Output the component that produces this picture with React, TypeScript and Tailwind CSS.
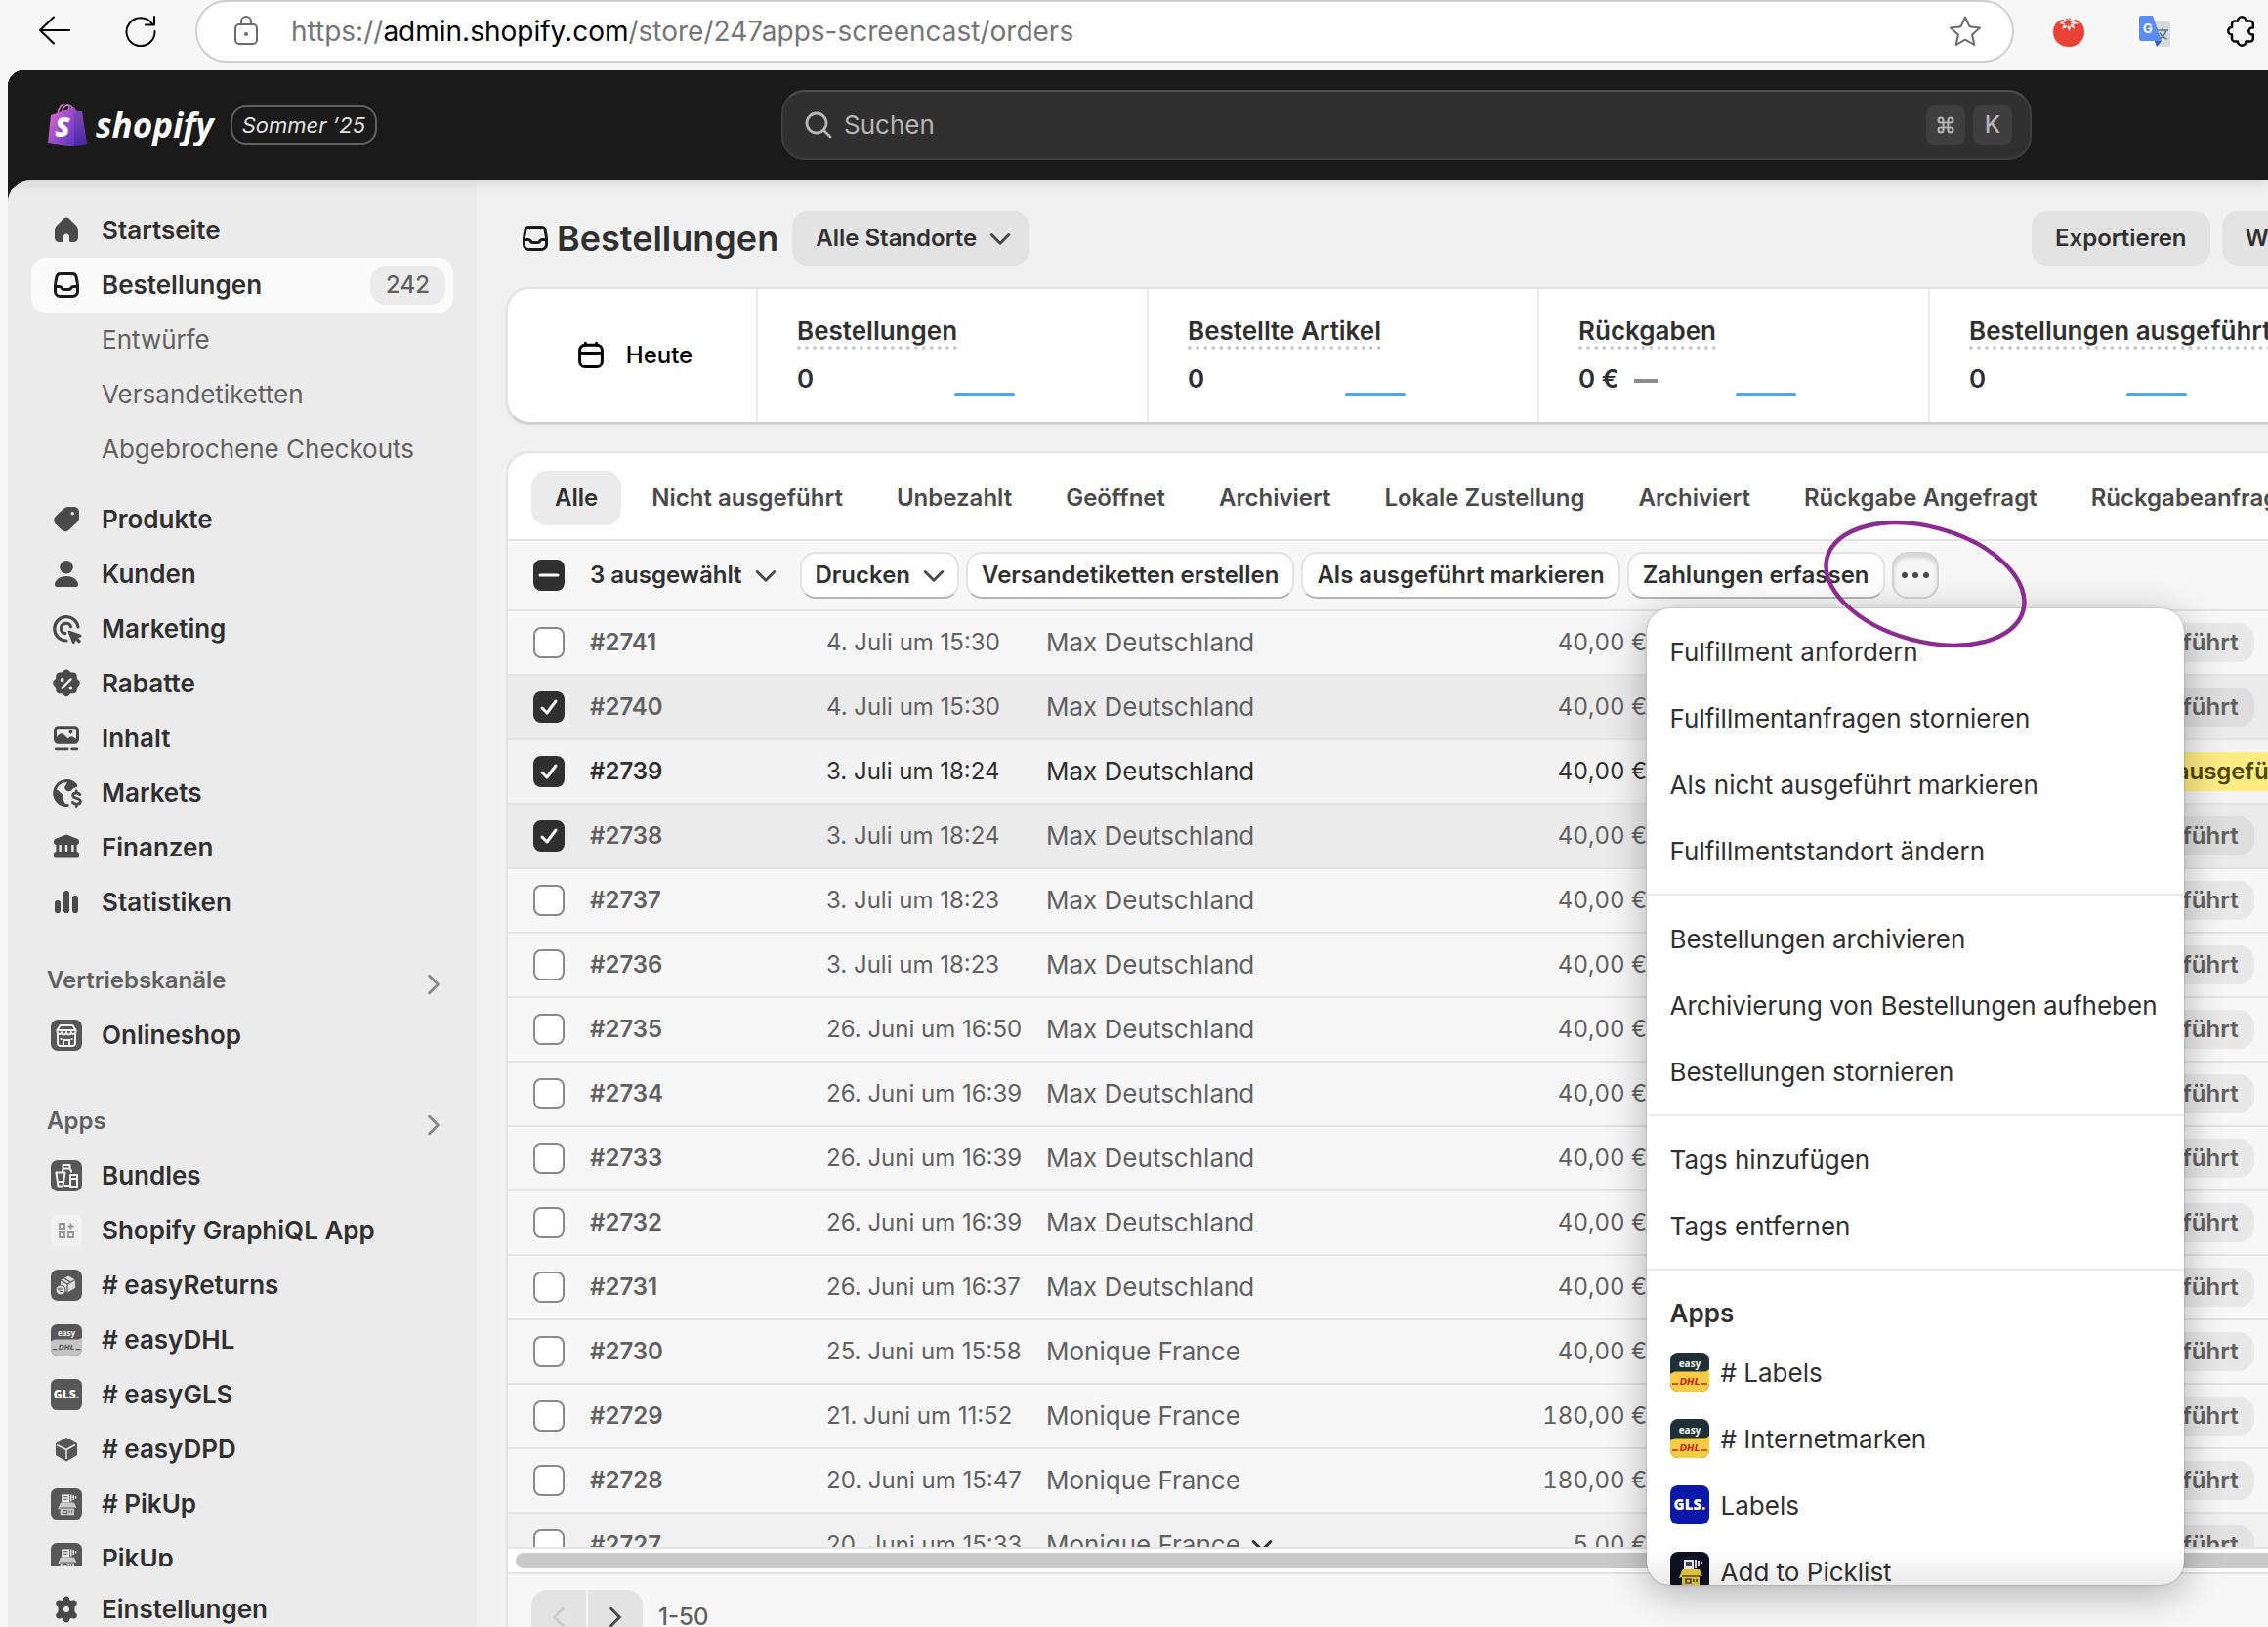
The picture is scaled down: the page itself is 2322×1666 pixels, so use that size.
import type { ReactNode } from "react";
import clsx from "clsx";
import { Command } from "lucide-react";

type NavItem = { label: string; icon: ReactNode };

type Order = {
  id: string;
  date: string;
  customer: string;
  total: string;
  checked?: boolean;
  open?: boolean;
  hovered?: boolean;
};

function Glyph({ children, className }: { children: ReactNode; className?: string }) {
  return (
    <svg
      viewBox="0 0 20 20"
      className={clsx("h-10 w-10 shrink-0", className)}
      fill="currentColor"
      fillRule="evenodd"
      aria-hidden
    >
      {children}
    </svg>
  );
}

function HomeIcon() {
  return (
    <Glyph>
      <path d="M8.6 3.9a2 2 0 0 1 2.8 0l3.6 3.6a3.3 3.3 0 0 1 1 2.4v3.8a2.3 2.3 0 0 1-2.3 2.3h-1.4a.8.8 0 0 1-.8-.8v-1.9a1.5 1.5 0 0 0-3 0v1.9a.8.8 0 0 1-.8.8H6.3A2.3 2.3 0 0 1 4 13.7V9.9c0-.9.4-1.8 1-2.4z" />
    </Glyph>
  );
}

function InboxIcon() {
  return (
    <Glyph className="text-[#1a1a1a]">
      <path
        d="M6.9 4.25h6.2a2 2 0 0 1 1.95 1.6l.6 3.3c.1.4.1.7.1 1.1v3a2.5 2.5 0 0 1-2.5 2.5h-6.5a2.5 2.5 0 0 1-2.5-2.5v-3c0-.4 0-.7.1-1.1l.6-3.3a2 2 0 0 1 1.95-1.6zM4.3 10.7h2.2c.4 0 .7.2.9.5l.3.5c.2.3.5.5.9.5h2.8c.4 0 .7-.2.9-.5l.3-.5c.2-.3.5-.5.9-.5h2.2"
        fill="none"
        stroke="currentColor"
        strokeWidth="1.5"
      />
    </Glyph>
  );
}

function TagIcon() {
  return (
    <Glyph>
      <path d="M10.9 3.5H14A2.5 2.5 0 0 1 16.5 6v3.1a3 3 0 0 1-.9 2.1l-4.2 4.1a2.7 2.7 0 0 1-3.8 0l-3.2-3.1a2.7 2.7 0 0 1 0-3.8l4.3-4a3 3 0 0 1 2.2-.9zM13.1 7.8a.9.9 0 1 0 0-1.8.9.9 0 0 0 0 1.8z" />
    </Glyph>
  );
}

function PersonIcon() {
  return (
    <Glyph>
      <circle cx="10" cy="6.4" r="3.4" />
      <path d="M4 15.2C4 13.1 6.6 11 10 11s6 2.1 6 4.2c0 .8-.6 1.3-1.4 1.3H5.4C4.6 16.5 4 16 4 15.2z" />
    </Glyph>
  );
}

function TargetIcon() {
  return (
    <Glyph>
      <path
        d="M16 9A6.1 6.1 0 1 0 10 16M12.3 8.9A2.6 2.6 0 1 0 9.4 12.3"
        fill="none"
        stroke="currentColor"
        strokeWidth="1.6"
        strokeLinecap="round"
      />
      <path d="M10.9 11.7c-.2-.5.3-1 .8-.8l5.6 2c.6.2.6 1 0 1.2l-1.3.5 1.2 1.2c.3.3.3.7 0 1l-.2.2c-.3.3-.7.3-1 0l-1.2-1.2-.6 1.3c-.2.6-1 .5-1.2 0z" />
    </Glyph>
  );
}

function DiscountIcon() {
  return (
    <Glyph>
      <path d="M8.7 3.3a1.9 1.9 0 0 1 2.6 0l.6.6c.2.2.4.3.7.3h.9c1 0 1.9.8 1.9 1.9v.9c0 .3.1.5.3.7l.6.6c.8.8.8 2 0 2.7l-.6.7c-.2.2-.3.4-.3.7v.8c0 1.1-.9 1.9-1.9 1.9h-.9c-.3 0-.5.1-.7.3l-.6.6c-.7.8-1.9.8-2.6 0l-.6-.6c-.2-.2-.4-.3-.7-.3h-.9c-1 0-1.9-.8-1.9-1.9v-.8c0-.3-.1-.5-.3-.7l-.6-.7c-.8-.7-.8-1.9 0-2.7l.6-.6c.2-.2.3-.4.3-.7v-.9c0-1.1.9-1.9 1.9-1.9h.9c.3 0 .5-.1.7-.3z" />
      <path d="M7.7 12.3l4.6-4.6" stroke="#ebebeb" strokeWidth="1.2" strokeLinecap="round" />
      <circle cx="7.8" cy="8" r="1" fill="#ebebeb" />
      <circle cx="12.2" cy="12.2" r="1" fill="#ebebeb" />
    </Glyph>
  );
}

function ContentIcon() {
  return (
    <Glyph>
      <path d="M5.8 3.6h8.4a2.3 2.3 0 0 1 2.3 2.3v4.7a2.3 2.3 0 0 1-2.3 2.3H5.8a2.3 2.3 0 0 1-2.3-2.3V5.9a2.3 2.3 0 0 1 2.3-2.3zM5 9.2l1.3-1.1c.7-.6 1.6-.6 2.3 0l2.2 2 .8-.6c.6-.5 1.4-.5 2 0l1.4.9V5.9c0-.5-.3-.8-.8-.8H5.8c-.5 0-.8.3-.8.8zM12.2 7.8a1 1 0 1 0 0-2 1 1 0 0 0 0 2z" />
      <path d="M4.6 15.4h6M12.8 15.4h2.6" stroke="currentColor" strokeWidth="1.4" strokeLinecap="round" />
    </Glyph>
  );
}

function MarketsIcon() {
  return (
    <Glyph>
      <path
        d="M14.9 6.1A6.2 6.2 0 1 0 10.6 16.2"
        fill="none"
        stroke="currentColor"
        strokeWidth="1.5"
        strokeLinecap="round"
      />
      <path d="M3.6 8.5c1.2-.5 2.2 0 2.7.7.6.8 1.7.8 1.9 1.8.2.9-.5 1.3-.2 2.2.3.7 1.4 1 1.7 3.4-3.4.2-6.3-2.6-6.3-6zM10.3 3.6l4.2 1.5c.5.6.9 1.2 1.1 1.7-1 .5-1.5.4-2.2 1-.7.7-1.2 1.6-2.5 1.3-1.4-.3-2.1-1.3-1.7-2.3.4-1.2 1.3-1.2 1.1-3.2z" />
      <path
        d="M16.9 10.8c-.4-.6-1-.8-1.8-.8-1.1 0-1.8.5-1.8 1.3 0 1.9 3.9.8 3.9 2.9 0 .9-.8 1.4-2 1.4-.9 0-1.6-.3-2-.9M15.1 8.9V10M15.1 15.6v1.2"
        fill="none"
        stroke="currentColor"
        strokeWidth="1.4"
        strokeLinecap="round"
      />
    </Glyph>
  );
}

function BankIcon() {
  return (
    <Glyph>
      <path d="M9.3 3.5c.5-.2.9-.2 1.4 0l5 2c.5.2.8.7.8 1.2v.6c0 .7-.6 1.2-1.2 1.2V12c.7 0 1.2.6 1.2 1.2v1.3c0 .4-.3.7-.7.7H4.2c-.4 0-.7-.3-.7-.7v-1.3c0-.6.5-1.2 1.2-1.2V8.5c-.6 0-1.2-.5-1.2-1.2v-.6c0-.5.3-1 .8-1.2zM6.2 8.5V12h1.2V8.5zM9.4 8.5V12h1.2V8.5zM12.6 8.5V12h1.2V8.5z" />
    </Glyph>
  );
}

function BarsIcon() {
  return (
    <Glyph>
      <rect x="4" y="9" width="3" height="6.5" rx="1.4" />
      <rect x="8.5" y="4" width="3" height="11.5" rx="1.4" />
      <rect x="13" y="6.5" width="3" height="9" rx="1.4" />
    </Glyph>
  );
}

function GearIcon() {
  return (
    <Glyph>
      <path d="M8.4 4.7C8.6 3.7 9.2 3.2 10 3.2s1.4.5 1.6 1.5c.1.6.7.9 1.2.7 1-.4 1.9-.2 2.4.6.4.8.3 1.500-.5 2.200-.4.4-.5.7-.5 1.800s.1 1.400.5 1.800c.8.7.9 1.400.5 2.200-.5.8-1.400 1-2.400.6-.5-.2-1.100.1-1.200.7-.2 1-.8 1.500-1.600 1.500s-1.400-.5-1.600-1.500c-.1-.6-.7-.9-1.200-.7-1 .4-1.900.2-2.400-.6-.4-.8-.3-1.500.5-2.200.4-.4.5-.7.5-1.800s-.1-1.400-.5-1.800c-.8-.7-.9-1.400-.5-2.200.5-.8 1.400-1 2.400-.6.5.2 1.100-.1 1.200-.7zM10 11.500a1.500 1.500 0 1 0 0-3 1.500 1.500 0 0 0 0 3z" />
    </Glyph>
  );
}

function CalendarIcon() {
  return (
    <Glyph className="text-black">
      <path
        d="M7.2 3.6v1.2M12.8 3.6v1.2M7 4.6h6a2.7 2.7 0 0 1 2.7 2.7v5.8a2.7 2.7 0 0 1-2.7 2.7H7a2.7 2.7 0 0 1-2.7-2.7V7.3A2.7 2.7 0 0 1 7 4.6zM4.3 8.7h11.4"
        fill="none"
        stroke="currentColor"
        strokeWidth="1.5"
        strokeLinecap="round"
      />
    </Glyph>
  );
}

function Chevron({ dir = "down", className }: { dir?: "down" | "right" | "left"; className?: string }) {
  const d = {
    down: "M3 6l5 5 5-5",
    right: "M5.5 3l5 5-5 5",
    left: "M10.5 3l-5 5 5 5",
  }[dir];
  return (
    <svg viewBox="0 0 16 16" className={clsx("h-7 w-7 shrink-0", className)} fill="none" aria-hidden>
      <path d={d} stroke="currentColor" strokeWidth="1.7" strokeLinecap="round" strokeLinejoin="round" />
    </svg>
  );
}

/* 32px app tiles in the sidebar, drawn on a 32 unit grid */
function Tile({ children, fill = "#575757" }: { children?: ReactNode; fill?: string }) {
  return (
    <svg viewBox="0 0 32 32" className="mx-1 h-8 w-8 shrink-0" fill="none" aria-hidden>
      <rect width="32" height="32" rx="7" fill={fill} />
      {children}
    </svg>
  );
}

function StoreTile() {
  return (
    <Tile>
      <path
        d="M9.5 6h13l3 5v2a2.4 2.4 0 0 1-4.7 0 2.4 2.4 0 0 1-4.8 0 2.4 2.4 0 0 1-4.8 0 2.4 2.4 0 0 1-4.7 0v-2zM7 15v9a3 3 0 0 0 3 3h12a3 3 0 0 0 3-3v-9"
        stroke="#f1f1f1"
        strokeWidth="2"
        strokeLinejoin="round"
      />
      <path d="M7 11h18M10.5 21v-2M21.5 21v-2M13 26.500V21h6v5.5" stroke="#f1f1f1" strokeWidth="2" />
    </Tile>
  );
}

function BundlesTile() {
  return (
    <Tile>
      <path
        d="M12.5 5h7v3.5h-7zM12 12c0-2 1-3.5 2-3.5h4c2 0 3 2 3 4M5.5 12.5h9l-2 14h-5zM8 22h5M20 15h7v12h-7zM20 19h7M14 26h6"
        stroke="#f1f1f1"
        strokeWidth="2"
        strokeLinejoin="round"
      />
    </Tile>
  );
}

function GraphTile() {
  return (
    <Tile fill="#f1f1f1">
      <path d="M9 9h5v5H9zM9 18h5v5H9zM18 18h5v5h-5zM20.5 8.5v6M17.5 11.5h6" stroke="#949494" strokeWidth="1.8" />
    </Tile>
  );
}

function ReturnsTile() {
  return (
    <Tile>
      <path d="M10 11l8-4.5 7 4v8.5l-8 4.5-3-2v-3l-4-2.5z" fill="#dcdcdc" />
      <path d="M10 11l7 4 8-4.5M17 15v8M13.5 9l7 4" stroke="#575757" strokeWidth="1.2" />
      <circle cx="10" cy="21" r="5" fill="#dcdcdc" stroke="#575757" />
      <path d="M7.5 20h5v2.5H9M9 18.5L7.5 20 9 21.5" stroke="#575757" />
    </Tile>
  );
}

function DhlTile({ muted }: { muted?: boolean }) {
  const ink = muted ? "#575757" : "#c8281e";
  return (
    <svg
      viewBox="0 0 40 40"
      className={muted ? "mx-1 h-8 w-8 shrink-0" : "h-10 w-10 shrink-0"}
      aria-hidden
    >
      <rect width="40" height="40" rx="8" fill={muted ? "#575757" : "#1f3136"} />
      <path
        d="M0 22c2-1 3-2.5 6-2.5h29c2.5 0 3.5-1.5 5-2.5v15a8 8 0 0 1-8 8H8a8 8 0 0 1-8-8z"
        fill={muted ? "#c4c4c4" : "#f6cc45"}
      />
      <text x="20" y="15" textAnchor="middle" fontFamily="Open Sans, sans-serif" fontWeight="700" fontSize="10" fill="#f5f5f5">
        easy
      </text>
      <path d="M2 32h6M32 32h6" stroke={ink} strokeWidth="1.4" />
      <text x="20" y="33" textAnchor="middle" fontFamily="DejaVu Sans, sans-serif" fontStyle="italic" fontWeight="700" fontSize="9" fill={ink}>
        DHL
      </text>
    </svg>
  );
}

function GlsTile({ muted }: { muted?: boolean }) {
  return (
    <svg
      viewBox="0 0 40 40"
      className={muted ? "mx-1 h-8 w-8 shrink-0" : "h-10 w-10 shrink-0"}
      aria-hidden
    >
      <rect width="40" height="40" rx="8" fill={muted ? "#575757" : "#0a18a8"} />
      <text x="20" y="25" textAnchor="middle" fontFamily="Open Sans, sans-serif" fontWeight="800" fontSize="15" fill="#fff">
        GLS
        <tspan fill={muted ? "#c4c4c4" : "#f6cc45"}>.</tspan>
      </text>
    </svg>
  );
}

function BoxTile() {
  return (
    <svg viewBox="0 0 32 32" className="mx-1 h-8 w-8 shrink-0" aria-hidden>
      <path d="M16 4l11 6v12L16 28.5 5 22V10z" fill="#575757" />
      <path d="M6 11.5l10 5V26M16 16.5l9-5" stroke="#ebebeb" strokeWidth="1.5" fill="none" />
    </svg>
  );
}

function PickTile({ muted }: { muted?: boolean }) {
  const box = muted ? "#c9c9c9" : "#e9c93c";
  const bg = muted ? "#575757" : "#0e1122";
  return (
    <svg
      viewBox="0 0 40 40"
      className={muted ? "mx-1 h-8 w-8 shrink-0" : "h-10 w-10 shrink-0"}
      aria-hidden
    >
      <rect width="40" height="40" rx="8" fill={bg} />
      <path d="M14 8h10v10H14z" fill="#f1f1f1" />
      <path d="M16 11h6M16 14h6" stroke={bg} strokeWidth="1.3" />
      <path d="M26 8v9M29 9v6M32 10v3" stroke="#f1f1f1" strokeWidth="1.8" />
      <path d="M12 18h18l3 7h-3v9H12v-8l-3 1z" fill={box} />
      <path d="M12 18l-3 6M12 25h19M16 28h5v4h-5zM24 28v3M27 28v3" stroke={bg} strokeWidth="1.2" fill="none" />
    </svg>
  );
}

const MAIN_NAV: NavItem[] = [
  { label: "Produkte", icon: <TagIcon /> },
  { label: "Kunden", icon: <PersonIcon /> },
  { label: "Marketing", icon: <TargetIcon /> },
  { label: "Rabatte", icon: <DiscountIcon /> },
  { label: "Inhalt", icon: <ContentIcon /> },
  { label: "Markets", icon: <MarketsIcon /> },
  { label: "Finanzen", icon: <BankIcon /> },
  { label: "Statistiken", icon: <BarsIcon /> },
];

const APP_NAV: NavItem[] = [
  { label: "Bundles", icon: <BundlesTile /> },
  { label: "Shopify GraphiQL App", icon: <GraphTile /> },
  { label: "# easyReturns", icon: <ReturnsTile /> },
  { label: "# easyDHL", icon: <DhlTile muted /> },
  { label: "# easyGLS", icon: <GlsTile muted /> },
  { label: "# easyDPD", icon: <BoxTile /> },
  { label: "# PikUp", icon: <PickTile muted /> },
  { label: "PikUp", icon: <PickTile muted /> },
];

const METRICS = [
  { label: "Bestellungen", value: "0" },
  { label: "Bestellte Artikel", value: "0" },
  { label: "Rückgaben", value: "0 €", flat: true },
  { label: "Bestellungen ausgeführt", value: "0" },
];

const TABS = [
  "Alle",
  "Nicht ausgeführt",
  "Unbezahlt",
  "Geöffnet",
  "Archiviert",
  "Lokale Zustellung",
  "Archiviert",
  "Rückgabe Angefragt",
  "Rückgabeanfragen",
];

const ORDERS: Order[] = [
  { id: "#2741", date: "4. Juli um 15:30", customer: "Max Deutschland", total: "40,00 €" },
  { id: "#2740", date: "4. Juli um 15:30", customer: "Max Deutschland", total: "40,00 €", checked: true },
  { id: "#2739", date: "3. Juli um 18:24", customer: "Max Deutschland", total: "40,00 €", checked: true, open: true },
  { id: "#2738", date: "3. Juli um 18:24", customer: "Max Deutschland", total: "40,00 €", checked: true },
  { id: "#2737", date: "3. Juli um 18:23", customer: "Max Deutschland", total: "40,00 €" },
  { id: "#2736", date: "3. Juli um 18:23", customer: "Max Deutschland", total: "40,00 €" },
  { id: "#2735", date: "26. Juni um 16:50", customer: "Max Deutschland", total: "40,00 €" },
  { id: "#2734", date: "26. Juni um 16:39", customer: "Max Deutschland", total: "40,00 €" },
  { id: "#2733", date: "26. Juni um 16:39", customer: "Max Deutschland", total: "40,00 €" },
  { id: "#2732", date: "26. Juni um 16:39", customer: "Max Deutschland", total: "40,00 €" },
  { id: "#2731", date: "26. Juni um 16:37", customer: "Max Deutschland", total: "40,00 €" },
  { id: "#2730", date: "25. Juni um 15:58", customer: "Monique France", total: "40,00 €" },
  { id: "#2729", date: "21. Juni um 11:52", customer: "Monique France", total: "180,00 €" },
  { id: "#2728", date: "20. Juni um 15:47", customer: "Monique France", total: "180,00 €" },
  { id: "#2727", date: "20. Juni um 15:33", customer: "Monique France", total: "5,00 €", hovered: true },
];

const MENU_SECTIONS = [
  [
    "Fulfillment anfordern",
    "Fulfillmentanfragen stornieren",
    "Als nicht ausgeführt markieren",
    "Fulfillmentstandort ändern",
  ],
  ["Bestellungen archivieren", "Archivierung von Bestellungen aufheben", "Bestellungen stornieren"],
  ["Tags hinzufügen", "Tags entfernen"],
];

const MENU_APPS: NavItem[] = [
  { label: "# Labels", icon: <DhlTile /> },
  { label: "# Internetmarken", icon: <DhlTile /> },
  { label: "Labels", icon: <GlsTile /> },
  { label: "Add to Picklist", icon: <PickTile /> },
];

function BrowserBar() {
  return (
    <div className="flex h-[72px] shrink-0 items-start bg-[#f7f7f7] pl-10">
      <button type="button" aria-label="Zurück" className="mt-4 h-8 w-8">
        <svg viewBox="0 0 32 32" fill="none" stroke="#000" strokeWidth="2" strokeLinecap="round" strokeLinejoin="round">
          <path d="M31 15H1M15 1.5L1 15l14 13.5" />
        </svg>
      </button>
      <button type="button" aria-label="Neu laden" className="mt-4 ml-14 h-8 w-8">
        <svg viewBox="0 0 32 32" fill="none" stroke="#000" strokeWidth="2" strokeLinecap="round" strokeLinejoin="round">
          <path d="M30.5 16A14.5 14.5 0 1 1 28 8.5M30 1v8.5h-9" />
        </svg>
      </button>
      <div className="ml-10 flex h-16 w-[1862px] shrink-0 items-center rounded-full border-2 border-[#cfcfcf] bg-white pr-8 pl-[38px]">
        <svg viewBox="0 0 24 32" className="h-8 w-6" fill="none" stroke="#6b6b6b" strokeWidth="2" aria-hidden>
          <rect x="1" y="9" width="22" height="20" rx="4" />
          <path d="M7 9V6a5 5 0 0 1 10 0v3" />
          <circle cx="12" cy="19" r="1" fill="#6b6b6b" />
        </svg>
        <div role="textbox" aria-label="Adresse" tabIndex={0} className="ml-[34px] flex-1 text-[28px] text-[#757575]">
          https://<span className="text-black">admin.shopify.com</span>/store/247apps-screencast/orders
        </div>
        <button type="button" aria-label="Lesezeichen" className="h-8 w-8">
          <svg viewBox="0 0 32 32" fill="none" stroke="#6b6b6b" strokeWidth="2" strokeLinejoin="round">
            <path d="M16 1.5l4.4 9.7 10.6 1.2-7.9 7.1 2.2 10.5L16 24.7 6.7 30l2.2-10.5L1 12.4l10.6-1.2z" />
          </svg>
        </button>
      </div>
      <svg viewBox="0 0 32 32" className="mt-4 ml-10 h-8 w-8 shrink-0" aria-hidden>
        <path d="M16 3c10 0 16 5 16 14 0 8-6 15-16 15S0 25 0 17C0 8 6 3 16 3z" fill="#ea4335" />
        <path d="M16 0l1 4 6-2-2 4 6 2-6 1 1 5-4-3-1 5-3-4-5 2 2-5-5-1 5-3-1-3 5 3z" fill="#f7f7f7" />
        <path d="M17 1l-.5 5 4-1-3 3 4 1-4 .5 1 2.5-3-2-1 3-1-3-2.5.5 1.5-2-3-1 3-1-2-2 4 1.5z" fill="#ea4335" />
      </svg>
      <svg viewBox="0 0 32 32" className="mt-4 ml-14 h-8 w-8 shrink-0" aria-hidden>
        <path d="M12 6h18a2 2 0 0 1 2 2v22a2 2 0 0 1-2 2H18z" fill="#d6d9dc" />
        <path d="M16 26h7l-5 6z" fill="#3a50c0" />
        <path d="M2 0h12l9 26H2a2 2 0 0 1-2-2V2a2 2 0 0 1 2-2z" fill="#5b8def" />
        <text x="9" y="18" textAnchor="middle" fontFamily="Inter, sans-serif" fontWeight="700" fontSize="13" fill="#fff">
          G
        </text>
        <path d="M19 15h11M24 12.5V15M28 15c-1 4-4 7-7 9M21 17.5c1 2 4 5 7.5 6.5" stroke="#5f7580" strokeWidth="1.5" fill="none" />
      </svg>
      <button type="button" aria-label="Erweiterungen" className="mt-4 ml-[58px] h-8 w-8 shrink-0">
        <svg viewBox="0 0 32 32" fill="none" stroke="#000" strokeWidth="2.5" strokeLinejoin="round">
          <path d="M11 5.5a4.2 4.2 0 0 1 8.4 0h4.4a3 3 0 0 1 3 3v4h-1a3.5 3.5 0 0 0 0 7h1v4a3 3 0 0 1-3 3h-4.4a4.2 4.2 0 0 1-8.4 0H8a3 3 0 0 1-3-3v-4a3.7 3.7 0 0 1 0-7.5V8.5a3 3 0 0 1 3-3z" />
        </svg>
      </button>
    </div>
  );
}

function TopBar() {
  return (
    <header className="relative z-10 flex h-28 shrink-0 items-center bg-[#1a1a1a] shadow-[0_2px_14px_rgba(0,0,0,0.12)]">
      <div className="flex w-[792px] shrink-0 items-center pl-10">
        <svg viewBox="0 0 42 46" className="h-[46px] w-[42px]" aria-hidden>
          <defs>
            <linearGradient id="bag" x1="0" y1="0" x2="1" y2="1">
              <stop offset="0" stopColor="#dd74c8" />
              <stop offset="0.5" stopColor="#a04ec8" />
              <stop offset="1" stopColor="#5a34c4" />
            </linearGradient>
            <linearGradient id="bag-side" x1="0" y1="0" x2="0" y2="1">
              <stop offset="0" stopColor="#8a4bb8" />
              <stop offset="1" stopColor="#4527a8" />
            </linearGradient>
          </defs>
          <path
            d="M11 12C12 5 16 1.5 19 1.5s4 3 4 7M15 11c1-5 4-8 7-8 2.5 0 4 2 5 5"
            fill="none"
            stroke="#cf6fc6"
            strokeWidth="1.6"
          />
          <path d="M4 13l24-8v40L1 41z" fill="url(#bag)" />
          <path d="M28 5l3 4h5l5 33-13 3z" fill="url(#bag-side)" />
          <text x="16" y="35" textAnchor="middle" fontFamily="Open Sans, sans-serif" fontStyle="italic" fontWeight="800" fontSize="28" fill="#fff">
            S
          </text>
        </svg>
        <span className="ml-2 font-['Open_Sans'] text-[35px] leading-10 font-bold text-white italic">shopify</span>
        <span className="ml-[17px] flex h-10 items-center rounded-2xl border-2 border-[#616161] px-2.5 text-[22px] text-[#e3e3e3] italic">
          Sommer ’25
        </span>
      </div>
      <label className="flex h-[72px] w-[1280px] shrink-0 items-center rounded-3xl border-2 border-[#3d3d3d] border-t-[#4f4f4f] bg-[#303030] pr-[18px] pl-[22px]">
        <svg viewBox="0 0 28 28" className="h-7 w-7" fill="none" stroke="#b5b5b5" strokeWidth="2.8" strokeLinecap="round" aria-hidden>
          <circle cx="12" cy="12" r="10" />
          <path d="M19.5 19.5l6.5 6.5" />
        </svg>
        <input
          type="search"
          placeholder="Suchen"
          aria-label="Suchen"
          className="ml-3 min-w-0 flex-1 bg-transparent text-[26px] leading-9 text-white outline-none placeholder:text-[#b5b5b5]"
        />
        <kbd className="flex h-10 w-10 items-center justify-center rounded-lg bg-[#3f3f3f] text-[#b5b5b5]">
          <Command size={20} strokeWidth={2.5} />
        </kbd>
        <kbd className="ml-2 flex h-10 w-10 items-center justify-center rounded-lg bg-[#3f3f3f] font-[Inter] text-[24px] font-medium text-[#b5b5b5]">
          K
        </kbd>
      </label>
    </header>
  );
}

function NavLink({ item }: { item: NavItem }) {
  return (
    <a href="#" className="flex h-14 items-center gap-4 rounded-2xl px-4 text-[#4a4a4a]">
      {item.icon}
      <span className="text-[26px] leading-9 font-semibold text-[#303030]">{item.label}</span>
    </a>
  );
}

function NavHeading({ children }: { children: ReactNode }) {
  return (
    <button type="button" className="flex h-14 w-full items-center justify-between pr-1.5 pl-4 text-[24px] font-semibold text-[#616161]">
      {children}
      <Chevron dir="right" className="mt-2 text-[#8a8a8a]" />
    </button>
  );
}

function Sidebar() {
  return (
    <aside className="flex w-[480px] shrink-0 flex-col bg-[#ebebeb]">
      <nav className="min-h-0 flex-1 overflow-hidden px-6 pt-6">
        <NavLink item={{ label: "Startseite", icon: <HomeIcon /> }} />
        <a href="#" aria-current="page" className="flex h-14 items-center gap-4 rounded-2xl bg-[#fafafa] px-4 pr-2">
          <InboxIcon />
          <span className="flex-1 text-[26px] leading-9 font-semibold text-[#303030]">Bestellungen</span>
          <span className="flex h-10 items-center rounded-2xl bg-[#ebebeb] px-4 text-[24px] font-medium text-[#616161]">242</span>
        </a>
        {["Entwürfe", "Versandetiketten", "Abgebrochene Checkouts"].map((label) => (
          <a key={label} href="#" className="flex h-14 items-center pl-[72px] text-[26px] leading-9 text-[#616161]">
            {label}
          </a>
        ))}
        <div className="mt-4">
          {MAIN_NAV.map((item) => (
            <NavLink key={item.label} item={item} />
          ))}
        </div>
        <div className="mt-6">
          <NavHeading>Vertriebskanäle</NavHeading>
          <NavLink item={{ label: "Onlineshop", icon: <StoreTile /> }} />
        </div>
        <div className="mt-8">
          <NavHeading>Apps</NavHeading>
          {APP_NAV.map((item) => (
            <NavLink key={item.label} item={item} />
          ))}
        </div>
      </nav>
      <div className="h-[62px] shrink-0 overflow-hidden px-6 pt-4">
        <NavLink item={{ label: "Einstellungen", icon: <GearIcon /> }} />
      </div>
    </aside>
  );
}

function PageHeader() {
  const button = "flex h-14 items-center gap-2.5 rounded-2xl bg-[#e3e3e3] px-6 text-[24px] font-semibold text-[#303030]";
  return (
    <div className="flex h-14 items-center pl-2.5">
      <InboxIcon />
      <h1 className="ml-0.5 text-[36px] font-semibold text-[#303030]">Bestellungen</h1>
      <button type="button" className={clsx(button, "ml-3.5 pr-4")}>
        Alle Standorte
        <Chevron className="text-[#4a4a4a]" />
      </button>
      <div className="ml-auto flex gap-3">
        <button type="button" className={button}>
          Exportieren
        </button>
        <button type="button" className={button}>
          Weitere Aktionen
        </button>
      </div>
    </div>
  );
}

function MetricsCard() {
  return (
    <section className="mt-[22px] flex h-[140px] shrink-0 rounded-3xl border-2 border-[#e3e3e3] border-b-[#cfcfcf] bg-white shadow-sm">
      <button type="button" className="flex w-[254px] shrink-0 items-center justify-center gap-4 text-[24px] font-medium text-black">
        <CalendarIcon />
        Heute
      </button>
      {METRICS.map((m) => (
        <div key={m.label} className="w-[400px] shrink-0 border-l-2 border-[#ebebeb] px-10 pt-7">
          <p className="flex">
            <span className="border-b-4 border-dotted border-[#cccccc] text-[26px] leading-[30px] font-semibold whitespace-nowrap text-[#303030]">
              {m.label}
            </span>
          </p>
          <div className="mt-2.5 flex h-10 text-[26px] leading-10 font-semibold text-[#303030]">
            <span className="w-[161px]">
              {m.value}
              {m.flat && <span className="ml-4 inline-block h-1 w-6 bg-[#8a8a8a] align-middle" />}
            </span>
            <span className="mt-[34px] h-1 w-[62px] rounded-full bg-[#51a7e8]" />
          </div>
        </div>
      ))}
    </section>
  );
}

function Tick({ label, checked, mixed }: { label: string; checked?: boolean; mixed?: boolean }) {
  return (
    <label className="grid h-8 w-8">
      <input
        type="checkbox"
        aria-label={label}
        defaultChecked={checked || mixed}
        className="col-start-1 row-start-1 h-8 w-8 appearance-none rounded-lg border-2 border-[#8a8a8a] bg-white checked:border-[#303030] checked:bg-[#303030]"
      />
      {(checked || mixed) && (
        <svg viewBox="0 0 32 32" className="pointer-events-none col-start-1 row-start-1 h-8 w-8" fill="none" aria-hidden>
          <path
            d={mixed ? "M7 16h18" : "M9 17l5 5 9-12"}
            stroke="#fff"
            strokeWidth="3"
            strokeLinecap="round"
            strokeLinejoin="round"
          />
        </svg>
      )}
    </label>
  );
}

function MoreMenu() {
  const item = "flex h-[68px] w-full items-center gap-3 px-6 text-left text-[26px] whitespace-nowrap text-[#303030]";
  return (
    <div
      role="menu"
      className="absolute top-[58px] left-1/2 z-20 max-h-[1000px] w-[550px] -translate-x-1/2 overflow-hidden rounded-3xl bg-white shadow-[0_0_2px_rgba(0,0,0,0.35),0_8px_40px_rgba(0,0,0,0.3)]"
    >
      {MENU_SECTIONS.map((section) => (
        <div key={section[0]} className="border-b-2 border-[#ebebeb] py-2.5">
          {section.map((label) => (
            <button key={label} type="button" role="menuitem" className={item}>
              {label}
            </button>
          ))}
        </div>
      ))}
      <p className="px-6 pt-[26px] pb-2 text-[26px] leading-9 font-semibold text-[#303030]">Apps</p>
      {MENU_APPS.map((app) => (
        <button key={app.label} type="button" role="menuitem" className={item}>
          {app.icon}
          {app.label}
        </button>
      ))}
      <div className="pointer-events-none absolute inset-x-0 bottom-0 h-10 bg-linear-to-b from-transparent to-black/8" />
    </div>
  );
}

function BulkBar() {
  const action =
    "flex h-12 items-center rounded-2xl border-2 border-[#e3e3e3] border-b-[#b5b5b5] bg-white px-3.5 text-[24px] font-semibold whitespace-nowrap text-[#303030]";
  return (
    <div className="flex h-[72px] shrink-0 items-center border-b-2 border-[#e3e3e3] bg-[#f7f7f7] pl-[26px]">
      <Tick label="Alle auswählen" mixed />
      <button type="button" className="ml-[26px] flex items-center gap-2.5 text-[24px] font-semibold text-[#303030]">
        3 ausgewählt
        <Chevron className="text-[#4a4a4a]" />
      </button>
      <div className="ml-[21px] flex gap-[7px]">
        <button type="button" className={clsx(action, "gap-2.5 pr-2.5")}>
          Drucken
          <Chevron className="text-[#4a4a4a]" />
        </button>
        <button type="button" className={action}>
          Versandetiketten erstellen
        </button>
        <button type="button" className={action}>
          Als ausgeführt markieren
        </button>
        <button type="button" className={action}>
          Zahlungen erfassen
        </button>
        <div className="relative">
          <button
            type="button"
            aria-label="Weitere Aktionen"
            aria-expanded
            className="flex h-12 w-12 items-center justify-center gap-[5px] rounded-2xl border-2 border-[#d4d4d4] bg-[#f7f7f7] shadow-[inset_0_4px_4px_rgba(0,0,0,0.15)]"
          >
            <span className="h-1.5 w-1.5 rounded-full bg-[#4a4a4a]" />
            <span className="h-1.5 w-1.5 rounded-full bg-[#4a4a4a]" />
            <span className="h-1.5 w-1.5 rounded-full bg-[#4a4a4a]" />
          </button>
          <MoreMenu />
          <svg
            viewBox="0 0 220 140"
            className="pointer-events-none absolute -top-[37px] -left-[76px] z-30 h-[140px] w-[220px]"
            fill="none"
            aria-hidden
          >
            <ellipse cx="110" cy="70" rx="104" ry="58.5" transform="rotate(15.3 110 70)" stroke="#8c2c92" strokeWidth="4.5" />
          </svg>
        </div>
      </div>
    </div>
  );
}

function StatusBadge({ open }: { open?: boolean }) {
  return (
    <span
      className={clsx(
        "flex h-10 w-fit items-center gap-2 rounded-2xl px-4 text-[24px] font-semibold",
        open ? "bg-[#ffec83] text-[#4f4700]" : "bg-black/6 text-[#616161]",
      )}
    >
      <span className={clsx("h-3 w-3 rounded-full border-2 border-current", !open && "bg-current")} />
      {open ? "Nicht ausgeführt" : "Ausgeführt"}
    </span>
  );
}

function rowClass(order: Order) {
  if (order.open) return "bg-[#f3f3f3] text-[#303030]";
  if (order.checked) return "bg-[#ebebeb] text-[#616161]";
  if (order.hovered) return "bg-[#f1f1f1] text-[#616161]";
  return "bg-[#f7f7f7] text-[#616161]";
}

function OrdersTable() {
  return (
    <div className="min-h-0 flex-1 overflow-hidden">
      <table className="w-full table-fixed border-separate border-spacing-0 text-[24px]">
        <colgroup>
          <col className="w-[84px]" />
          <col className="w-[242px]" />
          <col className="w-[225px]" />
          <col className="w-[329px]" />
          <col className="w-[286px]" />
          <col />
        </colgroup>
        <tbody>
          {ORDERS.map((order) => (
            <tr
              key={order.id}
              className={clsx("h-[66px] whitespace-nowrap [&>td]:border-b-2 [&>td]:border-[#e3e3e3]", rowClass(order))}
            >
              <td className="pl-[26px]">
                <Tick label={`Bestellung ${order.id} auswählen`} checked={order.checked} />
              </td>
              <td className="font-semibold">{order.id}</td>
              <td>{order.date}</td>
              <td className="text-[26px] leading-9">
                <span className="flex items-center gap-2">
                  {order.customer}
                  {order.hovered && <Chevron className="text-[#303030]" />}
                </span>
              </td>
              <td className="text-right tabular-nums">{order.total}</td>
              <td className="pl-[438px]">
                <StatusBadge open={order.open} />
              </td>
            </tr>
          ))}
        </tbody>
      </table>
    </div>
  );
}

function OrdersCard() {
  return (
    <section className="mt-7 flex min-h-0 flex-1 flex-col rounded-tl-3xl border-t-2 border-l-2 border-[#e3e3e3] bg-white">
      <div role="tablist" className="flex h-[90px] shrink-0 gap-[7px] border-b-2 border-[#e3e3e3] pt-[18px] pl-6">
        {TABS.map((tab, i) => (
          <button
            key={i}
            type="button"
            role="tab"
            aria-selected={i === 0}
            className={clsx(
              "h-14 rounded-2xl px-6 text-[24px] font-semibold whitespace-nowrap",
              i === 0 ? "bg-[#ebebeb] text-[#303030]" : "text-[#4a4a4a]",
            )}
          >
            {tab}
          </button>
        ))}
      </div>
      <BulkBar />
      <OrdersTable />
      <div className="shrink-0 border-y-2 border-[#e3e3e3] bg-white py-1 pl-2">
        <div className="h-4 rounded-full bg-[#cacaca]" />
      </div>
      <div className="flex h-[54px] shrink-0 items-start overflow-hidden bg-[#f7f7f7] pt-4 pl-6">
        <button type="button" disabled aria-label="Vorherige Seite" className="flex h-14 w-14 items-center justify-center rounded-l-2xl bg-[#e3e3e3]">
          <Chevron dir="left" className="text-[#cccccc]" />
        </button>
        <button type="button" aria-label="Nächste Seite" className="ml-0.5 flex h-14 w-14 items-center justify-center rounded-r-2xl bg-[#e3e3e3]">
          <Chevron dir="right" className="text-[#4a4a4a]" />
        </button>
        <span className="ml-4 text-[24px] leading-[56px] font-medium text-[#616161]">1-50</span>
      </div>
    </section>
  );
}

export default function App() {
  return (
    <div className="flex h-screen flex-col overflow-hidden bg-[#f7f7f7] font-[Inter,sans-serif]">
      <BrowserBar />
      <div className="ml-2 flex min-h-0 flex-1 flex-col overflow-hidden rounded-tl-2xl bg-[#1a1a1a]">
        <TopBar />
        <div className="flex min-h-0 flex-1 overflow-hidden rounded-tl-3xl bg-[#f1f1f1]">
          <Sidebar />
          <main className="min-w-0 flex-1 overflow-hidden pl-[30px]">
            <div className="flex h-full min-w-[2004px] flex-col pt-8">
              <PageHeader />
              <MetricsCard />
              <OrdersCard />
            </div>
          </main>
        </div>
      </div>
    </div>
  );
}
